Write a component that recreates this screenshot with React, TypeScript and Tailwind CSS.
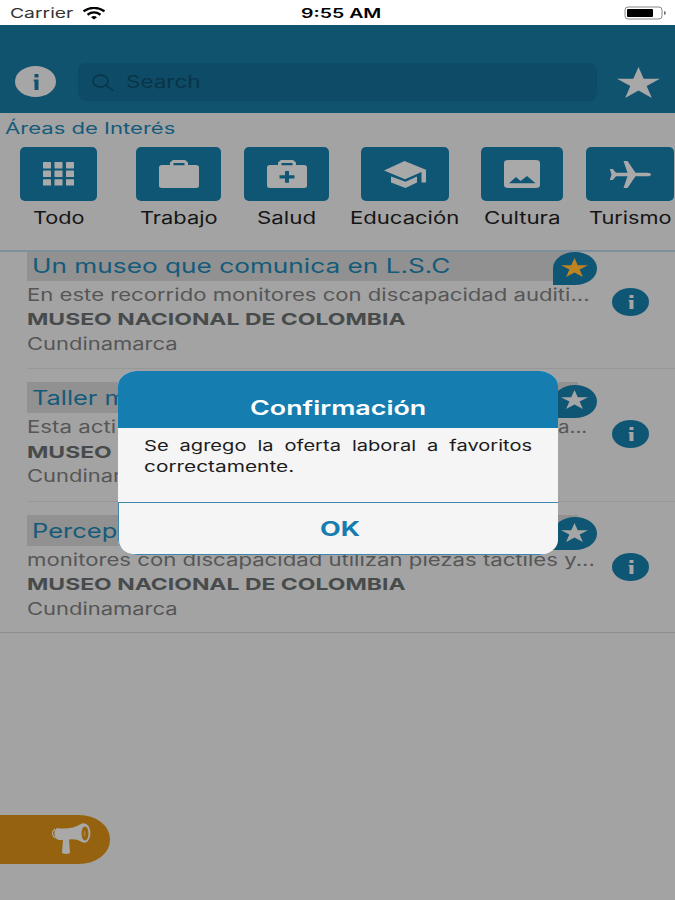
import { useLayoutEffect, useRef } from "react";
import type { ReactNode } from "react";

/** Single line of text stretched to a given width. */
function Wide({
  w,
  className = "",
  children,
}: {
  w: number;
  className?: string;
  children: ReactNode;
}) {
  const ref = useRef<HTMLSpanElement>(null);

  useLayoutEffect(() => {
    const el = ref.current;
    if (!el) return;
    const fit = () => {
      el.style.transform = `scaleX(${w / el.offsetWidth})`;
    };
    fit();
    document.fonts.ready.then(fit);
  }, [w]);

  return (
    <span className="block shrink-0" style={{ width: w }}>
      <span ref={ref} className={`inline-block origin-left align-top whitespace-nowrap ${className}`}>
        {children}
      </span>
    </span>
  );
}

function Star({ className }: { className: string }) {
  return (
    <svg viewBox="0 0 100 95" preserveAspectRatio="none" className={className} fill="currentColor">
      <path d="M50 0 62 36H100L69 58 81 95 50 72 19 95 31 58 0 36H38z" />
    </svg>
  );
}

function InfoMark({ className }: { className: string }) {
  return (
    <svg viewBox="0 0 12 30" preserveAspectRatio="none" className={className} fill="currentColor">
      <path d="M3 0h8v6.500H3zM1.500 10.500H11V30H3V14H1.500z" />
    </svg>
  );
}

const ICONS = {
  todo: (
    <svg viewBox="0 0 31 24" className="h-[24px] w-[31px]" fill="currentColor">
      {[0, 8.6, 17.2].map((y) =>
        [0, 11.5, 23].map((x) => <rect key={`${x}-${y}`} x={x} y={y} width="8" height="6.4" rx="0.6" />)
      )}
    </svg>
  ),
  trabajo: (
    <svg viewBox="0 0 40 28" className="h-[28px] w-[40px]" fill="currentColor" fillRule="evenodd">
      <path d="M14 0h12l3 2.500V5h8q3 0 3 2.500v18q0 2.500-3 2.500H3q-3 0-3-2.500v-18Q0 5 3 5h8V2.500zM14.500 3v2.300h11V3z" />
    </svg>
  ),
  salud: (
    <svg viewBox="0 0 40 28" className="h-[28px] w-[40px]" fill="currentColor" fillRule="evenodd">
      <path d="M14 0h12l3 2.500V5h8q3 0 3 2.500v18q0 2.500-3 2.500H3q-3 0-3-2.500v-18Q0 5 3 5h8V2.500zM14.500 3v2.300h11V3zM18 11v4.200h-5.500v3.200H18v4.300h4v-4.300h5.500v-3.200H22V11z" />
    </svg>
  ),
  educacion: (
    <svg viewBox="0 0 42 27" className="h-[27px] w-[42px]" fill="currentColor">
      <path d="M7 15.500v6L21.500 27 33 21.500v-6L21.500 20.700zM20.500 0 0 9.500 21 18.200 37.500 11v10.500H42V8.800z" />
    </svg>
  ),
  cultura: (
    <svg viewBox="0 0 36 28" className="h-[28px] w-[36px]" fill="currentColor" fillRule="evenodd">
      <path d="M4 0h28q4 0 4 3v22q0 3-4 3H4q-4 0-4-3V3q0-3 4-3zM5 23.300h26.500L23 16l-6.500 5-4.500-4z" />
    </svg>
  ),
  turismo: (
    <svg viewBox="0 0 42 27" className="h-[27px] w-[42px]" fill="currentColor">
      <path d="M42 13.400q0-1.700-4-1.700H26.500L18.500 0H14.500l4 11.700H7L3.800 8H.8l1.700 5.400L.8 19h3L7 15.200h11.500L14.500 27h4l8-11.800H38q4 0 4-1.800z" />
    </svg>
  ),
};

const AREAS = [
  { label: "Todo", icon: ICONS.todo, w: 51, tile: "w-[77px]", pos: "ml-5" },
  { label: "Trabajo", icon: ICONS.trabajo, w: 77, tile: "w-[85px]", pos: "ml-[39px]" },
  { label: "Salud", icon: ICONS.salud, w: 59, tile: "w-[85px]", pos: "ml-[23px]" },
  { label: "Educación", icon: ICONS.educacion, w: 109, tile: "w-[88px]", pos: "ml-[21px]" },
  { label: "Cultura", icon: ICONS.cultura, w: 76, tile: "w-[82px]", pos: "ml-[22px]" },
  { label: "Turismo", icon: ICONS.turismo, w: 83, tile: "w-[88px]", pos: "ml-[23px]" },
];

const OFFERS = [
  {
    title: "Un museo que comunica en L.S.C",
    titleW: 418,
    text: [{ value: "En este recorrido monitores con discapacidad auditi...", w: 563 }],
    favorite: true,
  },
  {
    title: "Taller m",
    titleW: 95,
    text: [
      { value: "Esta acti", w: 89 },
      { value: "a...", w: 29 },
    ],
    favorite: false,
  },
  {
    title: "Percepción",
    titleW: 136,
    text: [{ value: "monitores con discapacidad utilizan piezas táctiles y...", w: 568 }],
    favorite: false,
  },
];

function StatusBar() {
  return (
    <div className="grid h-[25px] grid-cols-[301px_1fr_51px] items-center bg-white text-black">
      <div className="flex items-center pt-px pl-[10px]">
        <Wide w={63} className="text-[13.500px] leading-[25px] text-[#333]">
          Carrier
        </Wide>
        <svg viewBox="0 0 24 13" className="ml-[9px] h-[13px] w-[24px]" fill="none" stroke="black">
          <path d="M1.500 4.200Q12-2.500 22.500 4.200" strokeWidth="2.300" />
          <path d="M5.500 7.700Q12 3.200 18.500 7.700" strokeWidth="2.300" />
          <path d="M9 10.200Q12 8 15 10.200L12 12.600z" fill="black" stroke="none" />
        </svg>
      </div>
      <div className="pt-px">
        <Wide w={81} className="text-[13px] leading-[25px] font-semibold">
          9:55 AM
        </Wide>
      </div>
      <svg viewBox="0 0 43 14" className="h-[14px] w-[43px]">
        <rect x="1" y="1" width="37" height="12" rx="3" fill="white" stroke="#888" />
        <rect x="3" y="3" width="26" height="8" rx="1" fill="black" />
        <path d="M40 5q2 .5 2 2t-2 2z" fill="#777" />
      </svg>
    </div>
  );
}

function Header() {
  return (
    <header className="flex h-[88px] items-end bg-[#10536f] pb-[12px] pl-[15px]">
      <div className="mb-[4px] flex h-[31px] w-[41px] items-center justify-center rounded-[50%] bg-[#a6a6a6] text-[#10536f]">
        <InfoMark className="h-[16px] w-[6px]" />
      </div>
      <div className="ml-[22px] flex h-[38px] w-[519px] items-center rounded-lg bg-[#0e4b66] pl-[14px] text-[#0a3448]">
        <svg viewBox="0 0 22 17" className="h-[17px] w-[22px]" fill="none" stroke="currentColor" strokeWidth="1.500">
          <ellipse cx="8.500" cy="7" rx="7.500" ry="6" />
          <path d="M14 11.500 21 16.500" />
        </svg>
        <div className="ml-[12px]">
          <Wide w={74} className="text-[17px] leading-[38px]">
            Search
          </Wide>
        </div>
      </div>
      <Star className="mb-[3px] ml-[20px] h-[31px] w-[43px] text-[#a8a8a8]" />
    </header>
  );
}

function Areas() {
  return (
    <section className="relative z-10 h-[139px] overflow-hidden border-b-2 border-[#7c919c] bg-[#a3a3a3] pt-[3px]">
      <div className="pl-[5px]">
        <Wide w={171} className="text-[16px] leading-6 text-[#155a7a]">
          Áreas de Interés
        </Wide>
      </div>
      <div className="mt-[7px] flex">
        {AREAS.map((area) => (
          <div key={area.label} className={`flex shrink-0 flex-col items-center ${area.pos}`}>
            <div
              className={`flex h-[54px] items-center justify-center rounded-[5px] bg-[#0f5675] text-[#a9a9a9] ${area.tile}`}
            >
              {area.icon}
            </div>
            <Wide w={area.w} className="mt-[5px] text-[17px] leading-6 text-[#151515]">
              {area.label}
            </Wide>
          </div>
        ))}
      </div>
    </section>
  );
}

function Offer({ offer }: { offer: (typeof OFFERS)[number] }) {
  return (
    <li className="group relative h-[132.500px] pl-[27px] last:h-[131px] last:border-b last:border-[#8d8d8d]">
      <div className="h-full border-[#979797] pt-[13px] group-[:not(:last-child)]:border-b">
        <div className="relative h-[31px] w-[551px] bg-[#919191] pt-px pl-[5px]">
          <Wide w={offer.titleW} className="text-[19.500px] leading-[31px] text-[#145b7b]">
            {offer.title}
          </Wide>
          <div className="absolute top-[2.500px] left-[525.500px] flex h-[33px] w-[44.500px] items-center justify-center rounded-[50%] rounded-bl-none bg-[#0f5675] pb-[3px]">
            <Star
              className={
                offer.favorite ? "h-[19px] w-[27px] text-[#bd841f]" : "h-[19px] w-[27px] text-[#a6a6a6]"
              }
            />
          </div>
        </div>
        <div className="mt-[2px] flex w-[560px] justify-between text-[#565656]">
          {offer.text.map((part) => (
            <Wide key={part.value} w={part.w} className="text-[17px] leading-[24.500px]">
              {part.value}
            </Wide>
          ))}
        </div>
        <Wide w={378} className="text-[16.500px] leading-[24.500px] font-bold text-[#484b4c]">
          MUSEO NACIONAL DE COLOMBIA
        </Wide>
        <Wide w={151} className="text-[17px] leading-[24.500px] text-[#565656]">
          Cundinamarca
        </Wide>
      </div>
      <div className="absolute top-[51px] left-[612px] flex h-[28px] w-[37px] items-center justify-center rounded-[50%] bg-[#0f5675] text-[#a6a6a6]">
        <InfoMark className="h-[14px] w-[6px]" />
      </div>
    </li>
  );
}

function Dialog() {
  return (
    <div
      role="dialog"
      className="absolute top-[371px] left-[118px] z-20 flex h-[184px] w-[440px] flex-col overflow-hidden rounded-[19px/15px] bg-[#f5f5f5]"
    >
      <div className="flex h-[57px] justify-center bg-[#157daf] pt-[22px]">
        <Wide w={176} className="text-[20px] leading-[31px] font-semibold text-white">
          Confirmación
        </Wide>
      </div>
      <div className="h-[74px] pt-[7px] pl-[26px] text-[15px] leading-[21px] text-[#1c1c1c]">
        <Wide w={388} className="[word-spacing:4px]">
          Se agrego la oferta laboral a favoritos
        </Wide>
        <Wide w={150}>correctamente.</Wide>
      </div>
      <button className="flex flex-1 items-center justify-center rounded-bl-[15px] border border-r-0 border-[#3f86ae] pt-[2px] pr-[7px] text-[#157daf]">
        <Wide w={40} className="text-[19.500px] leading-[31px] font-bold">
          OK
        </Wide>
      </button>
    </div>
  );
}

function Announce() {
  return (
    <button className="absolute top-[815px] left-0 flex h-[49px] w-[110px] items-center rounded-[0_31px_31px_0/0_24px_24px_0] bg-[#95630f] pl-[51px] text-[#a9a9a9]">
      <svg viewBox="0 0 40 31" className="mb-[2px] h-[31px] w-[40px]" fill="currentColor">
        <path d="M6 5Q20 7 29 1.500Q34-1.500 37.500 3Q41 9.500 38 16.500Q35 22 30 18.500Q25 15.500 18 16.500L19 30Q15 32 11 30L12 17H8Q3 16 3.500 10Q4 6 6 5z" />
        <path d="M4 6Q-1 10.500 4 15" fill="none" stroke="currentColor" strokeWidth="1.200" />
        <ellipse cx="34" cy="10.500" rx="3.500" ry="7" fill="#95630f" />
        <ellipse cx="33.500" cy="10.500" rx="1.200" ry="3" fill="#a77c3a" />
      </svg>
    </button>
  );
}

export default function App() {
  return (
    <div className="relative h-[900px] w-[675px] overflow-hidden bg-[#a3a3a3] font-['Inter',sans-serif]">
      <StatusBar />
      <Header />
      <Areas />
      <ul className="-mt-[15.500px]">
        {OFFERS.map((offer) => (
          <Offer key={offer.title} offer={offer} />
        ))}
      </ul>
      <Dialog />
      <Announce />
    </div>
  );
}
